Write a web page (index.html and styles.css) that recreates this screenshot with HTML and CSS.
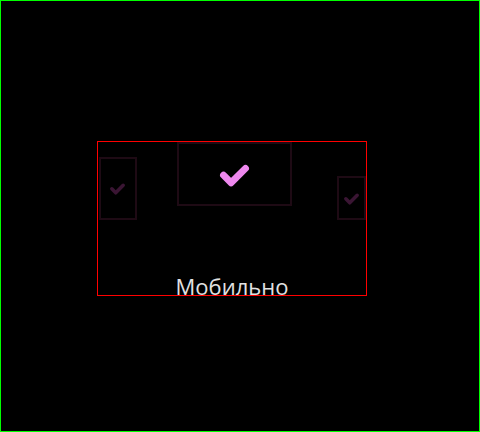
FILE: index.html
```html
<!DOCTYPE html>
<html>
<head>
<meta charset="utf-8">
<link rel="stylesheet" href="styles.css">
</head>
<body>
<div class="screen">
  <div class="frame">
    <div class="row">
      <div class="tile tile-left">
        <svg class="check dim" viewBox="0 0 24 24" width="17" height="17"><path d="M4 12.5 L9.5 18 L20 7.5"/></svg>
      </div>
      <div class="tile tile-center">
        <svg class="check active" viewBox="0 0 24 24" width="33" height="33"><path d="M4 12.5 L9.5 18 L20 7.5"/></svg>
      </div>
      <div class="tile tile-right">
        <svg class="check dim" viewBox="0 0 24 24" width="17" height="17"><path d="M4 12.5 L9.5 18 L20 7.5"/></svg>
      </div>
    </div>
    <div class="label">Мобильно</div>
  </div>
</div>
</body>
</html>
```
FILE: styles.css
```css
html, body {
  margin: 0;
  padding: 0;
  background: #000;
}
.screen {
  box-sizing: border-box;
  width: 480px;
  height: 432px;
  border: 1px solid #00ff00;
  padding: 140px 0 0 96px;
}
.frame {
  box-sizing: border-box;
  width: 270px;
  height: 155px;
  border: 1px solid #ff0000;
  display: flex;
  flex-direction: column;
}
.row {
  display: flex;
  align-items: flex-start;
}
.tile {
  box-sizing: border-box;
  border: 2px solid #1e0a14;
  display: flex;
  align-items: center;
  justify-content: center;
}
.tile-left {
  width: 38px;
  height: 63px;
  margin: 15px 0 0 1px;
}
.tile-center {
  width: 116px;
  height: 64px;
  margin-left: 40px;
}
.tile-right {
  width: 29px;
  height: 44px;
  margin: 34px 0 0 45px;
}
.check path {
  fill: none;
  stroke-width: 5;
  stroke-linecap: round;
  stroke-linejoin: round;
}
.check.active path {
  stroke: #ee88ee;
}
.check.dim path {
  stroke: #3a1533;
}
.label {
  margin-top: auto;
  text-align: center;
  font-family: "Open Sans", sans-serif;
  font-size: 22px;
  line-height: 17px;
  color: #e2e2e2;
}
```
